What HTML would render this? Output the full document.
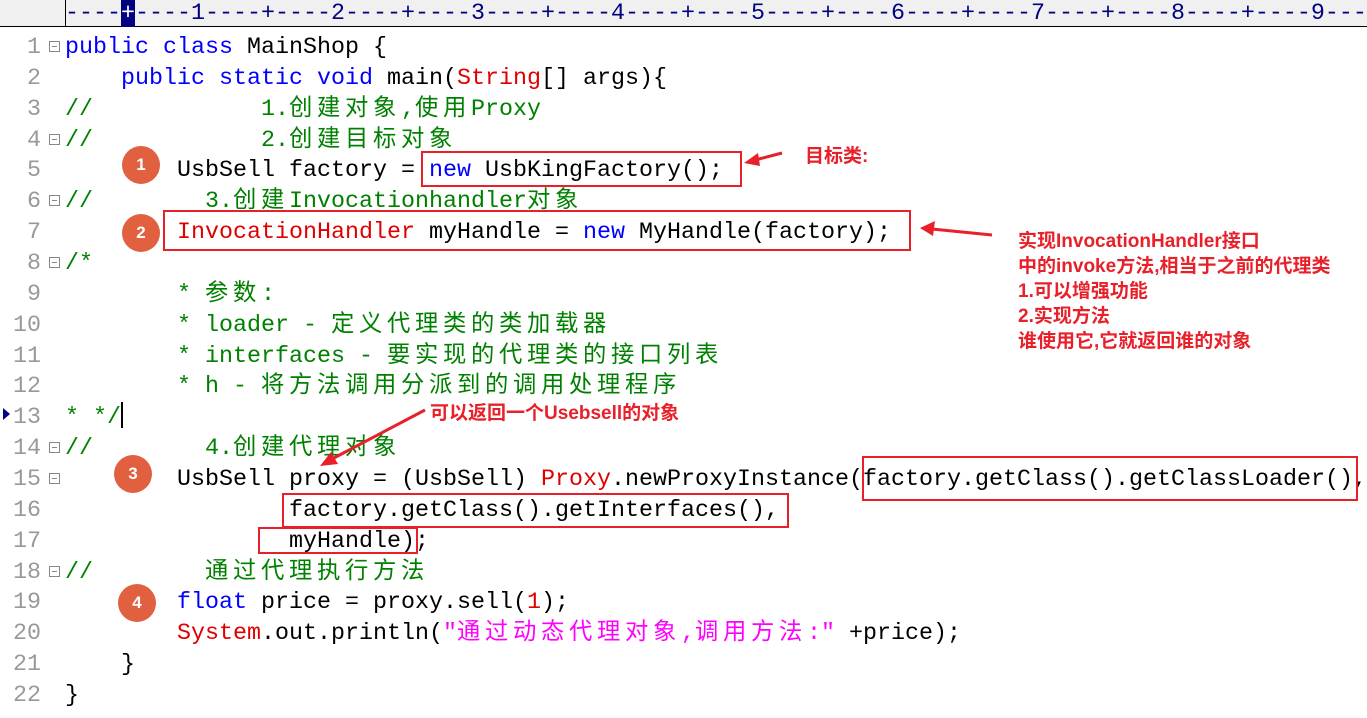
<!DOCTYPE html>
<html><head><meta charset="utf-8">
<style>
*{margin:0;padding:0;box-sizing:border-box}
body{width:1367px;height:718px;background:#fff;position:relative;overflow:hidden;font-family:"Liberation Mono","Noto Sans CJK SC",monospace;}
.ruler{position:absolute;left:0;top:0;width:1367px;height:27px;background:#f0f0f0;border-bottom:1px solid #000;}
.rl{position:absolute;left:65px;top:0;height:27px;border-left:1px solid #000;}
.rt{position:absolute;left:65px;top:2px;font-size:23.33px;line-height:24px;color:#000080;white-space:pre;}
.ln{position:absolute;left:0;width:41px;text-align:right;font-size:23.33px;color:#999;}
.fd{position:absolute;left:49px;width:11px;height:11px;border:1px solid #888;}
.fd:after{content:"";position:absolute;left:2px;top:4px;width:5px;height:1px;background:#888}
.code{position:absolute;left:65px;font-size:23.33px;white-space:pre;color:#000;line-height:30px}
.k{color:#0000ff}.r{color:#e00000}.c{color:#008000}.s{color:#ff00ff}
.cj{letter-spacing:4.67px}
.box{position:absolute;border:2px solid #e8202a}
.circ{position:absolute;width:38px;height:38px;border-radius:50%;background:#e0603f;color:#fff;font:bold 17px "Liberation Sans",sans-serif;text-align:center;line-height:38px}
.note{position:absolute;color:#e8202a;font:bold 19px "Liberation Sans","Noto Sans CJK SC",sans-serif;white-space:pre;line-height:25px}
</style></head><body>
<div class="ruler"><div class="rl"></div>
<div style="position:absolute;left:121px;top:0;width:14px;height:27px;background:#000080"></div>
<div class="rt">----<span style="color:#fff">+</span>----1----+----2----+----3----+----4----+----5----+----6----+----7----+----8----+----9---</div>
</div>

<div id="g"></div>
<script>
var lines=[
'<span class="k">public class</span> MainShop {',
'    <span class="k">public static void</span> main(<span class="r">String</span>[] args){',
'<span class="c">//            1.<span class="cj">创建对象</span>,<span class="cj">使用</span>Proxy</span>',
'<span class="c">//            2.<span class="cj">创建目标对象</span></span>',
'        UsbSell factory = <span class="k">new</span> UsbKingFactory();',
'<span class="c">//        3.<span class="cj">创建</span>Invocationhandler<span class="cj">对象</span></span>',
'        <span class="r">InvocationHandler</span> myHandle = <span class="k">new</span> MyHandle(factory);',
'<span class="c">/*</span>',
'<span class="c">        * <span class="cj">参数</span>:</span>',
'<span class="c">        * loader - <span class="cj">定义代理类的类加载器</span></span>',
'<span class="c">        * interfaces - <span class="cj">要实现的代理类的接口列表</span></span>',
'<span class="c">        * h - <span class="cj">将方法调用分派到的调用处理程序</span></span>',
'<span class="c">* */</span>',
'<span class="c">//        4.<span class="cj">创建代理对象</span></span>',
'        UsbSell proxy = (UsbSell) <span class="r">Proxy</span>.newProxyInstance(factory.getClass().getClassLoader(),',
'                factory.getClass().getInterfaces(),',
'                myHandle);',
'<span class="c">//        <span class="cj">通过代理执行方法</span></span>',
'        <span class="k">float</span> price = proxy.sell(<span class="r">1</span>);',
'        <span class="r">System</span>.out.println(<span class="s">"<span class="cj">通过动态代理对象</span>,<span class="cj">调用方法</span>:"</span> +price);',
'    }',
'}'];
var folds=[1,4,6,8,14,15,18];
var h='';
for(var i=0;i<lines.length;i++){
 var t=33+i*30.86;
 h+='<div class="ln" style="top:'+t+'px;line-height:30px">'+(i+1)+'</div>';
 h+='<div class="code" style="top:'+t+'px">'+lines[i]+'</div>';
 if(folds.indexOf(i+1)>=0)h+='<div class="fd" style="top:'+(t+8)+'px"></div>';
}
document.getElementById('g').innerHTML=h;
</script>
<div style="position:absolute;left:3px;top:408px;width:0;height:0;border-top:6px solid transparent;border-bottom:6px solid transparent;border-left:7px solid #000080"></div>
<div style="position:absolute;left:121px;top:402px;width:2px;height:26px;background:#000"></div>

<div class="box" style="left:421px;top:151px;width:321px;height:36px"></div>
<div class="box" style="left:163px;top:210px;width:748px;height:41px"></div>
<div class="box" style="left:862px;top:456px;width:496px;height:45px"></div>
<div class="box" style="left:282px;top:493px;width:507px;height:35px"></div>
<div class="box" style="left:258px;top:527px;width:160px;height:27px"></div>

<div class="circ" style="left:122px;top:146px">1</div>
<div class="circ" style="left:122px;top:214px">2</div>
<div class="circ" style="left:114px;top:455px">3</div>
<div class="circ" style="left:118px;top:584px">4</div>

<svg style="position:absolute;left:0;top:0" width="1367" height="718">
<g stroke="#e8202a" stroke-width="3" fill="#e8202a">
<line x1="782" y1="153" x2="755" y2="160"/><polygon points="744,163 758,153 760,166" stroke="none"/>
<line x1="992" y1="235" x2="932" y2="229"/><polygon points="920,228 935,221 933,236" stroke="none"/>
<line x1="425" y1="410" x2="332" y2="459"/><polygon points="320,466 331,452 338,464" stroke="none"/>
</g></svg>

<div class="note" style="left:805px;top:144px">目标类:</div>
<div class="note" style="left:1018px;top:229px">实现InvocationHandler接口
中的invoke方法,相当于之前的代理类
1.可以增强功能
2.实现方法
谁使用它,它就返回谁的对象</div>
<div class="note" style="left:430px;top:401px">可以返回一个Usebsell的对象</div>
</body></html>
